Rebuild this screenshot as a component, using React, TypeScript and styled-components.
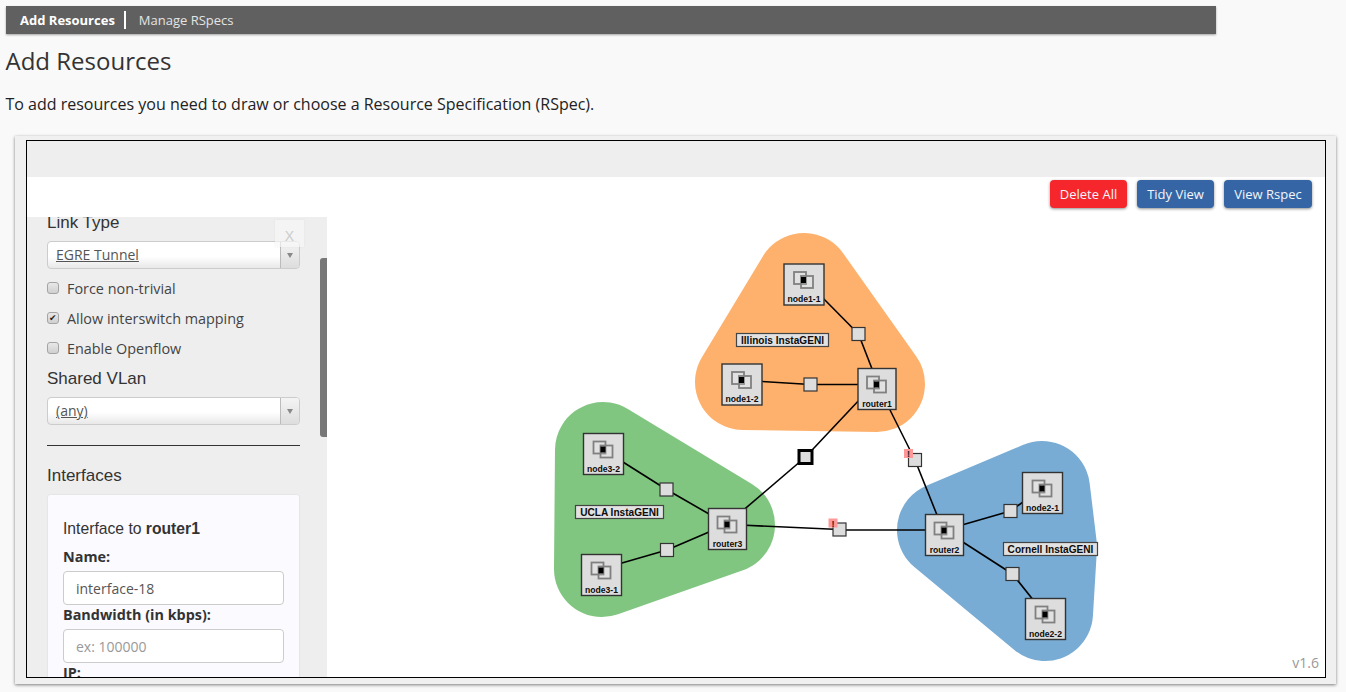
import styled, { createGlobalStyle } from 'styled-components';

const GlobalStyle = createGlobalStyle`
  html, body {
    margin: 0;
    padding: 0;
    height: 100%;
    overflow: hidden;
    background: #f9f9f9;
    font-family: 'Open Sans', sans-serif;
    color: #333;
  }
`;

const NavBar = styled.nav`
  width: 1210px;
  height: 28px;
  margin: 6px 0 0 6px;
  padding-left: 14px;
  box-sizing: border-box;
  display: flex;
  align-items: center;
  background: #606060;
  box-shadow: 0 1px 2px rgba(0, 0, 0, 0.35);
  font-size: 13px;
`;

const NavActive = styled.span`
  color: #fff;
  font-weight: 700;
  padding-right: 9px;
  line-height: 18px;
  border-right: 2px solid #fff;
`;

const NavLink = styled.span`
  color: #e4e4e4;
  margin-left: 13px;
`;

const Title = styled.h1`
  margin: 10px 0 0 5.5px;
  font-size: 24px;
  font-weight: 400;
  line-height: 33px;
  color: #333;
`;

const Intro = styled.p`
  margin: 16px 0 0 5.5px;
  font-size: 16px;
  line-height: 22px;
  color: #222;
`;

const Panel = styled.section`
  width: 1321px;
  height: 548px;
  margin: 21px 0 0 15px;
  padding: 4px 10px 6px 11px;
  box-sizing: border-box;
  background: #f0f0f0;
  box-shadow: 0 1px 3px rgba(0, 0, 0, 0.5);
`;

const Editor = styled.div`
  position: relative;
  height: 538px;
  box-sizing: border-box;
  border: 1px solid #000;
  background: #fff;
  overflow: hidden;
`;

const TopBand = styled.div`
  height: 36px;
  background: #eee;
`;

const Workspace = styled.div`
  display: flex;
  height: 500px;
`;

const Sidebar = styled.aside`
  position: relative;
  width: 300px;
  height: 460px;
  margin-top: 40px;
  background: #eee;
  overflow: hidden;
  flex: none;
`;

const SidebarContent = styled.div`
  margin-top: -5px;
  padding: 0 27px 0 20px;
`;

const SectionLabel = styled.div`
  font-family: 'Liberation Sans', Arial, sans-serif;
  font-size: 17px;
  line-height: 22px;
  color: #333;
`;

const Select = styled.div`
  display: flex;
  height: 28px;
  margin-top: 7px;
  box-sizing: border-box;
  border: 1px solid #ccc;
  border-radius: 4px;
  background: linear-gradient(#fff 55%, #e8e8e8);
  font-size: 14px;
  color: #555;
`;

const SelectValue = styled.span`
  flex: 1;
  padding-left: 8px;
  line-height: 26px;
  text-decoration: underline;
`;

const SelectArrow = styled.span`
  width: 18px;
  display: flex;
  align-items: center;
  justify-content: center;
  border-left: 1px solid #bbb;
  background: linear-gradient(#f4f4f4, #ddd);
  border-radius: 0 3px 3px 0;

  &::after {
    content: '';
    margin-top: 1px;
    border: 3.5px solid transparent;
    border-top: 5px solid #888;
    border-bottom: 0;
  }
`;

const CheckRows = styled.div`
  margin-top: 4px;
`;

const CheckRow = styled.label`
  display: flex;
  align-items: center;
  height: 30px;
  gap: 8px;
  font-size: 14.4px;
  color: #444;
`;

const CheckBox = styled.input`
  appearance: none;
  position: relative;
  width: 12px;
  height: 12px;
  margin: 0;
  box-sizing: border-box;
  border: 1px solid #a4a4a4;
  border-radius: 3px;
  background: linear-gradient(#e8e8e8, #cfcfcf);

  &:checked::after {
    content: '✔';
    position: absolute;
    left: 1px;
    top: -1px;
    font-family: 'DejaVu Sans', sans-serif;
    font-size: 9px;
    line-height: 13px;
    color: #222;
  }
`;

const SharedLabel = styled(SectionLabel)`
  margin-top: 5px;
`;

const Rule = styled.hr`
  height: 1px;
  margin: 20px 0 0;
  border: 0;
  background: #333;
`;

const InterfacesLabel = styled(SectionLabel)`
  margin-top: 19px;
`;

const InterfaceCard = styled.div`
  margin: 8px 1px 0;
  padding: 23px 15px 0;
  background: #fafaff;
  box-shadow: 0 0 2px rgba(0, 0, 0, 0.12);
  border-radius: 2px;
`;

const CardHeading = styled.div`
  font-family: 'Liberation Sans', Arial, sans-serif;
  font-size: 15.7px;
  line-height: 22px;
  color: #333;
`;

const FieldLabel = styled.label`
  display: block;
  font-size: 14.4px;
  font-weight: 700;
  line-height: 20px;
  color: #333;
`;

const NameLabel = styled(FieldLabel)`
  margin-top: 7px;
  margin-bottom: 4px;
`;

const SpacedLabel = styled(FieldLabel)`
  margin-bottom: 4px;
`;

const TextInput = styled.input`
  display: block;
  width: 100%;
  height: 34px;
  box-sizing: border-box;
  padding: 0 12px;
  border: 1px solid #ccc;
  border-radius: 4px;
  background: #fff;
  font-family: 'Open Sans', sans-serif;
  font-size: 14px;
  color: #555;

  &::placeholder {
    color: #999;
    opacity: 1;
  }
`;

const CloseButton = styled.div`
  position: absolute;
  left: 248px;
  top: 3px;
  width: 29px;
  height: 27px;
  background: rgba(248, 248, 248, 0.65);
  box-shadow: 0 0 2px rgba(0, 0, 0, 0.06);
  text-align: center;
  font-family: 'Liberation Sans', Arial, sans-serif;
  font-size: 14px;
  line-height: 32px;
  color: #ccc;
`;

const ScrollThumb = styled.div`
  position: absolute;
  left: 293px;
  top: 41px;
  width: 7px;
  height: 179px;
  border-radius: 3px 0 0 3px;
  background: #777;
`;

const Canvas = styled.svg`
  display: block;
  width: 998px;
  height: 500px;
  flex: none;
`;

const Toolbar = styled.div`
  position: absolute;
  top: 39px;
  right: 13px;
  display: flex;
  gap: 10px;
`;

const ActionButton = styled.button<{ $danger?: boolean; $width: number }>`
  width: ${({ $width }) => $width}px;
  height: 28px;
  padding: 0;
  border: 0;
  border-radius: 4px;
  background: ${({ $danger }) => ($danger ? '#f5262c' : '#3565a5')};
  box-shadow: 0 1px 3px rgba(0, 0, 0, 0.45);
  font-family: 'Open Sans', sans-serif;
  font-size: 13px;
  color: #f2f6fb;
`;

const Version = styled.div`
  position: absolute;
  right: 6px;
  bottom: 5px;
  font-size: 14px;
  color: #999;
`;

const Hull = styled.polygon<{ $color: string }>`
  fill: ${({ $color }) => $color};
  stroke: ${({ $color }) => $color};
  stroke-width: 96px;
  stroke-linejoin: round;
`;

const LinkLine = styled.line`
  stroke: #000;
  stroke-width: 1.6px;
`;

const NodeBox = styled.rect`
  fill: #ddd;
  stroke: #333;
  stroke-width: 1.4px;
`;

const IconSquare = styled.rect`
  fill: rgba(255, 255, 255, 0.12);
  stroke: #808080;
  stroke-width: 1.8px;
`;

const IconCore = styled.rect`
  fill: #000;
`;

const NodeName = styled.text`
  font-family: 'Liberation Sans', Arial, sans-serif;
  font-size: 8.6px;
  font-weight: 700;
  fill: #0c0c0c;
  text-anchor: middle;
`;

const SiteBox = styled.rect`
  fill: #e2e2e2;
  stroke: #444;
  stroke-width: 1.2px;
`;

const SiteName = styled.text`
  font-family: 'Liberation Sans', Arial, sans-serif;
  font-size: 10.1px;
  font-weight: 700;
  fill: #0c0c0c;
  text-anchor: middle;
`;

const PortBox = styled.rect<{ $selected?: boolean }>`
  fill: #ddd;
  stroke: ${({ $selected }) => ($selected ? '#000' : '#333')};
  stroke-width: ${({ $selected }) => ($selected ? '3px' : '1.2px')};
`;

const WarnBox = styled.rect`
  fill: #f99;
`;

const WarnMark = styled.text`
  font-family: 'Liberation Sans', Arial, sans-serif;
  font-size: 9px;
  font-weight: 700;
  fill: #222;
  text-anchor: middle;
`;

const hulls = [
  { color: '#feb16d', points: '804,281 743,382 877,384' },
  { color: '#80c680', points: '603,450 602,569 727,525' },
  { color: '#78acd4', points: '945,530 1042,489 1049,547 1045,613' },
];

const links = [
  [815, 290, 858.5, 334],
  [858.5, 334, 874, 374],
  [755, 381, 810.5, 384.5],
  [810.5, 384.5, 865, 384.5],
  [862, 397, 805.5, 457],
  [805.5, 457, 740, 513],
  [886, 402, 915, 460],
  [915, 460, 939, 520],
  [740, 525, 839.5, 529.5],
  [839.5, 530, 935, 530],
  [615, 457, 666.5, 489.5],
  [666.5, 489.5, 716, 518],
  [615, 565, 667, 550],
  [667, 550, 716, 529],
  [955, 527, 1010.5, 511],
  [1010.5, 511, 1030, 497],
  [955, 537, 1012.5, 574],
  [1012.5, 574, 1038, 606],
];

const nodes = [
  { name: 'node1-1', x: 784, y: 264, w: 40 },
  { name: 'node1-2', x: 722, y: 364, w: 40 },
  { name: 'router1', x: 858, y: 368.5, w: 38 },
  { name: 'node3-2', x: 583.5, y: 433.5, w: 40 },
  { name: 'node3-1', x: 581.5, y: 554.5, w: 40 },
  { name: 'router3', x: 708.5, y: 508.5, w: 38 },
  { name: 'router2', x: 925.5, y: 514.5, w: 38 },
  { name: 'node2-1', x: 1022.5, y: 472.5, w: 40 },
  { name: 'node2-2', x: 1025.5, y: 598.5, w: 40 },
];

const sites = [
  { name: 'Illinois InstaGENI', x: 736.5, y: 333.5, w: 92 },
  { name: 'UCLA InstaGENI', x: 575.5, y: 505.5, w: 88 },
  { name: 'Cornell InstaGENI', x: 1003.5, y: 542.5, w: 94 },
];

const ports = [
  { x: 858.5, y: 334 },
  { x: 810.5, y: 384.5 },
  { x: 805.5, y: 457, selected: true },
  { x: 915, y: 460, warn: true },
  { x: 666.5, y: 489.5 },
  { x: 667, y: 550 },
  { x: 839.5, y: 529.5, warn: true },
  { x: 1010.5, y: 511 },
  { x: 1012.5, y: 574 },
];

function Topology() {
  return (
    <Canvas viewBox="327 177 998 500">
      {hulls.map(h => (
        <Hull key={h.color} $color={h.color} points={h.points} />
      ))}
      {links.map(([x1, y1, x2, y2]) => (
        <LinkLine key={`${x1}-${y1}-${x2}`} x1={x1} y1={y1} x2={x2} y2={y2} />
      ))}
      {sites.map(s => (
        <g key={s.name}>
          <SiteBox x={s.x} y={s.y} width={s.w} height={13} />
          <SiteName x={s.x + s.w / 2} y={s.y + 10}>
            {s.name}
          </SiteName>
        </g>
      ))}
      {ports.map(p => (
        <g key={`${p.x}-${p.y}`}>
          <PortBox $selected={p.selected} x={p.x - 6.5} y={p.y - 6.5} width={13} height={13} />
          {p.warn && (
            <>
              <WarnBox x={p.x - 11} y={p.y - 11} width={9} height={9} />
              <WarnMark x={p.x - 6.5} y={p.y - 3}>
                !
              </WarnMark>
            </>
          )}
        </g>
      ))}
      {nodes.map(n => (
        <g key={n.name} transform={`translate(${n.x} ${n.y})`}>
          <NodeBox width={n.w} height={41} />
          <IconSquare x={n.w / 2 - 10} y={8} width={12} height={12} />
          <IconSquare x={n.w / 2 - 3} y={12} width={12} height={12} />
          <IconCore x={n.w / 2 - 3} y={13} width={5} height={6} />
          <NodeName x={n.w / 2} y={38}>
            {n.name}
          </NodeName>
        </g>
      ))}
    </Canvas>
  );
}

export default function App() {
  return (
    <>
      <GlobalStyle />
      <NavBar>
        <NavActive>Add Resources</NavActive>
        <NavLink>Manage RSpecs</NavLink>
      </NavBar>
      <Title>Add Resources</Title>
      <Intro>To add resources you need to draw or choose a Resource Specification (RSpec).</Intro>
      <Panel>
        <Editor>
          <TopBand />
          <Workspace>
            <Sidebar>
              <SidebarContent>
                <SectionLabel>Link Type</SectionLabel>
                <Select>
                  <SelectValue>EGRE Tunnel</SelectValue>
                  <SelectArrow />
                </Select>
                <CheckRows>
                  <CheckRow>
                    <CheckBox type="checkbox" />
                    Force non-trivial
                  </CheckRow>
                  <CheckRow>
                    <CheckBox type="checkbox" defaultChecked />
                    Allow interswitch mapping
                  </CheckRow>
                  <CheckRow>
                    <CheckBox type="checkbox" />
                    Enable Openflow
                  </CheckRow>
                </CheckRows>
                <SharedLabel>Shared VLan</SharedLabel>
                <Select>
                  <SelectValue>(any)</SelectValue>
                  <SelectArrow />
                </Select>
                <Rule />
                <InterfacesLabel>Interfaces</InterfacesLabel>
                <InterfaceCard>
                  <CardHeading>
                    Interface to <strong>router1</strong>
                  </CardHeading>
                  <NameLabel>Name:</NameLabel>
                  <TextInput defaultValue="interface-18" />
                  <SpacedLabel>Bandwidth (in kbps):</SpacedLabel>
                  <TextInput placeholder="ex: 100000" />
                  <FieldLabel>IP:</FieldLabel>
                </InterfaceCard>
              </SidebarContent>
              <CloseButton>X</CloseButton>
              <ScrollThumb />
            </Sidebar>
            <Topology />
          </Workspace>
          <Toolbar>
            <ActionButton $danger $width={77}>
              Delete All
            </ActionButton>
            <ActionButton $width={77}>Tidy View</ActionButton>
            <ActionButton $width={88}>View Rspec</ActionButton>
          </Toolbar>
          <Version>v1.6</Version>
        </Editor>
      </Panel>
    </>
  );
}
